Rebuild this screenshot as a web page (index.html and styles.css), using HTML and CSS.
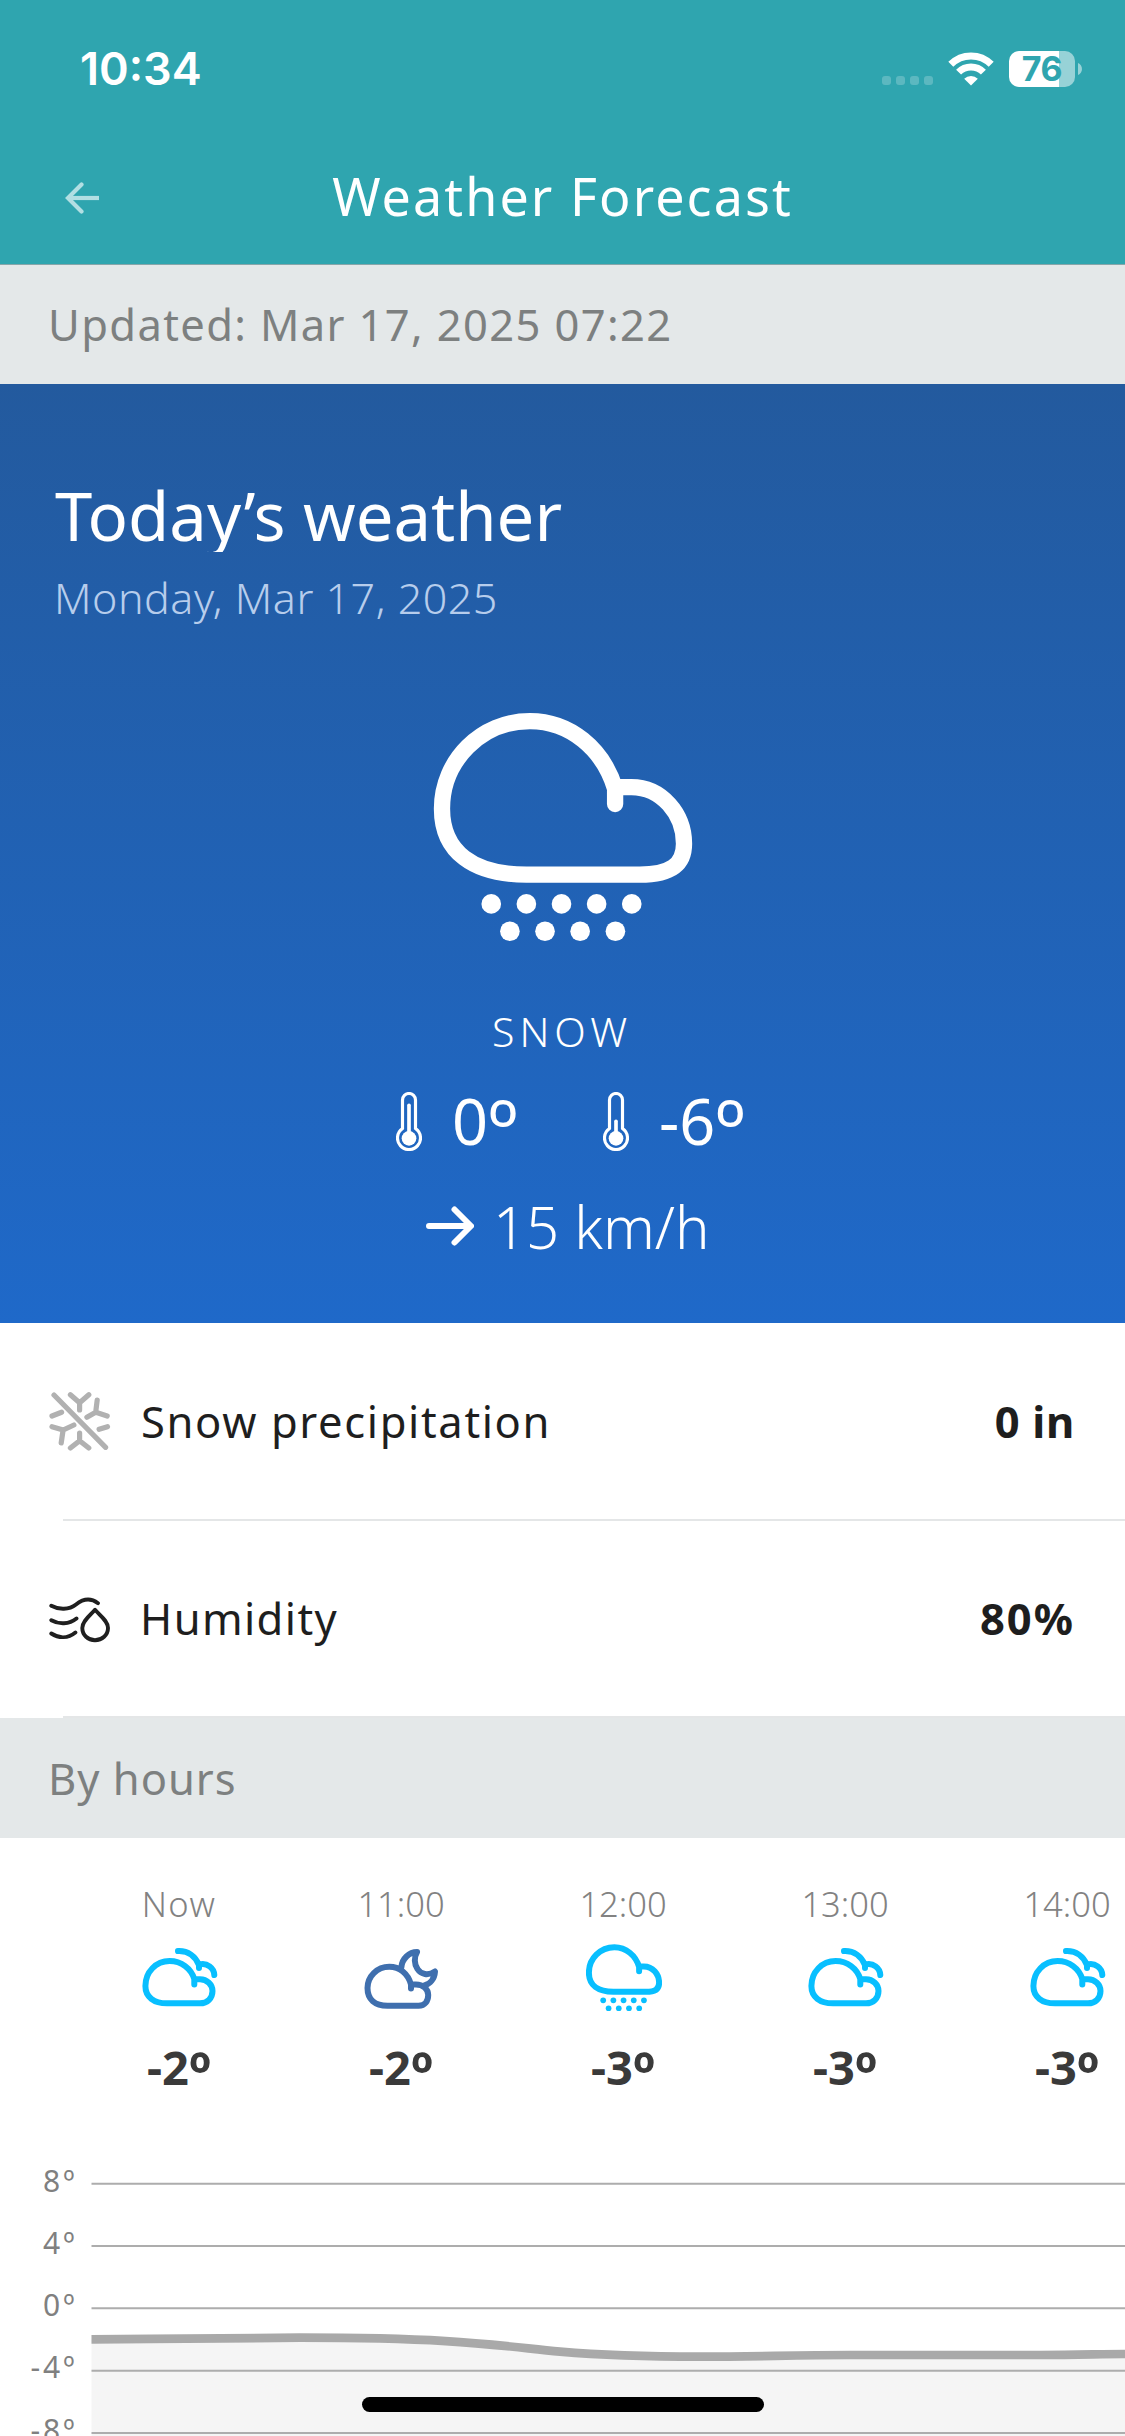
FILE: index.html
```html
<!DOCTYPE html>
<html lang="en">
<head>
<meta charset="utf-8">
<title>Weather Forecast</title>
<link rel="stylesheet" href="styles.css">
</head>
<body>
<svg class="defs" aria-hidden="true">
  <symbol id="snow-cloud" viewBox="96 92 787 696">
    <path d="M646 371V325C610 205 510 122 390 122C244 122 126 240 126 385C126 515 220 583 380 583H720C810 583 853 555 853 490C853 400 785 320 695 320H650" fill="none" stroke="currentColor" stroke-linecap="round" stroke-linejoin="round"/>
    <g fill="currentColor" stroke="none">
      <circle cx="274" cy="671" r="29.5"/><circle cx="379.5" cy="671" r="29.5"/><circle cx="485" cy="671" r="29.5"/><circle cx="590.5" cy="671" r="29.5"/><circle cx="696" cy="671" r="29.5"/>
      <circle cx="330" cy="753" r="29.5"/><circle cx="435.5" cy="753" r="29.5"/><circle cx="541" cy="753" r="29.5"/><circle cx="647" cy="753" r="29.5"/>
    </g>
  </symbol>
  <symbol id="cloudy" viewBox="0 0 90 70">
    <path d="M60.3 41.5V36C57 25.5 47.5 18 35.6 18C22 18 11.4 29 11.4 43C11.4 54 20 60.3 33 60.3H66C73.5 60.3 78.5 55 78.5 48C78.5 41.5 73 36.3 66 36.3H61M44 8C54 7.5 61.5 13.5 65 22V25M65.500 21.500C73 19.500 80 25 80.300 32"/>
  </symbol>
  <symbol id="night-cloud" viewBox="0 0 90 70">
    <path d="M55 45.500V41.500C52 30.500 43.500 23.700 33.300 23.700C21 23.700 11.500 33.500 11.500 45C11.500 56.500 19 62.700 31.500 62.700H62.600C69 62.700 72.200 58 72.200 52C72.200 46 67 41.400 60 41.400H56M45.400 24C46 16 53 9 61.100 9C58 14 58 21 61.500 26C65 31.500 72 33 79 28.500C78.500 36 74 41 68.500 42.500"/>
  </symbol>
</svg>

<main class="screen">
  <header class="header">
    <div class="status">
      <span class="clock">10:34</span>
      <div class="status-icons">
        <svg width="52" height="36" viewBox="0 0 52 36" fill="#fff" fill-opacity=".22"><rect x="0" y="25" width="9" height="9" rx="3"/><rect x="14" y="25" width="9" height="9" rx="3"/><rect x="28" y="25" width="9" height="9" rx="3"/><rect x="42" y="25" width="9" height="9" rx="3"/></svg>
        <svg class="wifi" width="46" height="36" viewBox="0 0 46 36" fill="none" stroke="#fff" stroke-width="7">
          <path d="M2.800 13.300A28.500 28.500 0 0 1 43.200 13.300"/>
          <path d="M10.600 21.100A17.500 17.500 0 0 1 35.400 21.100"/>
          <path d="M16.200 27.700L23 34.500L29.800 27.700A9.800 9.800 0 0 0 16.200 27.700Z" fill="#fff" stroke="none"/>
        </svg>
        <div class="battery"><span class="battery-level">76</span><svg class="battery-tip" width="4" height="12" viewBox="0 0 4 12"><path d="M0 0C5.300 2 5.300 10 0 12Z" fill="#fff" fill-opacity=".5"/></svg></div>
      </div>
    </div>
    <nav class="nav">
      <svg class="back" width="36" height="32" viewBox="0 0 36 32" fill="none" stroke="#b2dfe3" stroke-width="4.200" stroke-linecap="round"><path d="M16.500 2.500L3 16L16.500 29.500"/><path d="M4 16H34" stroke-linecap="butt"/></svg>
      <h1 class="title">Weather Forecast</h1>
    </nav>
  </header>

  <div class="bar updated">Updated: Mar 17, 2025 07:22</div>

  <section class="hero">
    <h2 class="hero-title">Today’s weather</h2>
    <p class="hero-date">Monday, Mar 17, 2025</p>
    <svg class="hero-icon"><use href="#snow-cloud"/></svg>
    <p class="condition">SNOW</p>
    <div class="temps">
      <svg class="thermo" viewBox="108 303 78 177"><path d="M127.500 412.500V327A19.500 19.500 0 0 1 166.500 327V412.500A34.500 34.500 0 1 1 127.500 412.500Z" fill="none" stroke="#fff" stroke-width="9.500"/><circle cx="147" cy="442" r="22" fill="#fff"/><path d="M147 343V430" stroke="#fff" stroke-width="11" stroke-linecap="round"/></svg>
      <span class="temp high">0<span class="deg">º</span></span>
      <svg class="thermo" viewBox="108 303 78 177"><path d="M127.500 412.500V327A19.500 19.500 0 0 1 166.500 327V412.500A34.500 34.500 0 1 1 127.500 412.500Z" fill="none" stroke="#fff" stroke-width="9.500"/><circle cx="147" cy="442" r="22" fill="#fff"/><path d="M147 391V430" stroke="#fff" stroke-width="11" stroke-linecap="round"/></svg>
      <span class="temp low">-6<span class="deg">º</span></span>
    </div>
    <div class="wind">
      <svg width="48" height="40" viewBox="0 0 48 40" fill="none" stroke="#fff" stroke-width="6" stroke-linecap="round" stroke-linejoin="round"><path d="M3 20H44M28.500 3.500L45 20L28.500 36.500"/></svg>
      <span>15 km/h</span>
    </div>
  </section>

  <ul class="details">
    <li class="detail">
      <svg width="62" height="60" viewBox="0 0 62 60" fill="none" stroke="#b1b1b1" stroke-width="5.200" stroke-linecap="round"><path d="M5 4L56.600 56.300M21.400 3.700L30.600 11.700L39.800 3.700M30.600 11.700V19M21.400 57L30.600 49.700L39.800 57M30.600 49.700V42M48.200 9L46.700 21.300L58.200 25M46.700 21.300L37.900 26.300M3 25L12.600 21.300M3 35.700L14.100 39L24.900 34M14.100 39L12.200 52M50.100 38.300L58.500 35.700"/></svg>
      <span class="detail-name">Snow precipitation</span>
      <strong class="detail-value">0 in</strong>
    </li>
    <li class="detail">
      <svg width="62" height="60" viewBox="0 0 62 60" fill="none" stroke="#1f1f1f" stroke-width="3.900" stroke-linecap="round" stroke-linejoin="round"><path d="M2.300 17.800C10 22 20 22 27 16.500C34 11 42 10 49 15.200M2.300 32.200C10 36.500 20 36.500 27.500 30.500M2.300 45.500C10 50.500 19 50.500 26.400 44.500M46 21.800C41 27.500 33.300 33 33.300 40C33.300 47 39 52.200 46 52.200S59 47 59 40C59 33 51 27.500 46 21.800Z"/></svg>
      <span class="detail-name humidity">Humidity</span>
      <strong class="detail-value percent">80%</strong>
    </li>
  </ul>

  <div class="bar by-hours">By hours</div>

  <section class="hours">
    <div class="hour"><span class="hour-time now">Now</span><svg class="hour-icon"><use href="#cloudy"/></svg><b class="hour-temp">-2<span class="deg">º</span></b></div>
    <div class="hour"><span class="hour-time">11:00</span><svg class="hour-icon night"><use href="#night-cloud"/></svg><b class="hour-temp">-2<span class="deg">º</span></b></div>
    <div class="hour"><span class="hour-time">12:00</span><svg class="hour-icon snow"><use href="#snow-cloud"/></svg><b class="hour-temp">-3<span class="deg">º</span></b></div>
    <div class="hour"><span class="hour-time">13:00</span><svg class="hour-icon"><use href="#cloudy"/></svg><b class="hour-temp">-3<span class="deg">º</span></b></div>
    <div class="hour"><span class="hour-time">14:00</span><svg class="hour-icon"><use href="#cloudy"/></svg><b class="hour-temp">-3<span class="deg">º</span></b></div>
  </section>

  <svg class="chart" width="1125" height="344" viewBox="0 0 1125 344">
    <path d="M91.500 247.300C160 247.300 220 245.700 300 245.700C460 245.700 500 254 560 259.700C610 264 650 264.700 700 264.700C760 264.700 790 263 850 263H1040C1080 263 1100 262 1125 262V344H91.500Z" fill="#f5f5f5"/>
    <path d="M91.500 91.700H1125M91.500 154H1125M91.500 216.300H1125M91.500 278.700H1125M91.500 341H1125" stroke="#adadad" stroke-width="2"/>
    <path d="M91.500 247.300C160 247.300 220 245.700 300 245.700C460 245.700 500 254 560 259.700C610 264 650 264.700 700 264.700C760 264.700 790 263 850 263H1040C1080 263 1100 262 1125 262" fill="none" stroke="#a9a9a9" stroke-width="8.700"/>
    <g class="axis" text-anchor="end"><text x="77.500" y="99.700">8º</text><text x="77.500" y="161.700">4º</text><text x="77.500" y="223.800">0º</text><text x="77.500" y="286.300">-4º</text><text x="77.500" y="348.600">-8º</text></g>
  </svg>

  <div class="home-indicator"></div>
</main>
</body>
</html>
```
FILE: styles.css
```css
* { box-sizing: border-box; }
body, h1, h2, p, ul { margin: 0; padding: 0; }
body {
  background: #fff;
  font-family: "Noto Sans", "Open Sans", sans-serif;
}
svg { display: block; flex: none; }
.defs { position: absolute; width: 0; height: 0; }

.screen {
  position: relative;
  width: 1125px;
  height: 2436px;
  overflow: hidden;
}

/* Header */
.header {
  height: 265px;
  background: #2fa5af;
  border-bottom: 1px solid #87a6aa;
  color: #fff;
}
.status {
  display: flex;
  align-items: center;
  justify-content: space-between;
  height: 138px;
  padding: 0 43px 0 80px;
}
.clock { font: 600 45px/60px Inter, sans-serif; }
.status-icons { display: flex; align-items: center; }
.wifi { margin: 0 15px 0 14px; }
.battery { display: flex; align-items: center; gap: 3px; }
.battery-level {
  width: 66px;
  height: 36px;
  border-radius: 10px;
  background: linear-gradient(90deg, #fff 50px, rgba(255, 255, 255, .5) 50px);
  color: #2fa5af;
  font: 700 34px/36px Inter, sans-serif;
  letter-spacing: -0.5px;
  text-align: center;
}
.nav {
  display: grid;
  grid-template-columns: 1fr auto 1fr;
  align-items: center;
  height: 116px;
}
.back { margin: 4px 0 0 65px; }
.title {
  font-size: 52px;
  font-weight: 400;
  line-height: 70px;
  letter-spacing: 2.1px;
}

/* Grey bars */
.bar {
  padding-left: 48px;
  background: #e4e8e9;
  color: #7d8080;
  font-size: 43.5px;
}
.updated { height: 119px; line-height: 118px; letter-spacing: 1.37px; }
.by-hours { height: 120px; line-height: 120px; letter-spacing: 1px; }

/* Today */
.hero {
  height: 939px;
  padding: 94px 0 0 55px;
  background: linear-gradient(#235a9e, #1f69c9);
  color: #fff;
}
.hero-title {
  height: 74px;
  overflow: hidden;
  font-size: 67px;
  font-weight: 400;
  line-height: 74px;
}
.hero-date {
  margin: 21px 0 0 -1px;
  color: #b7cdec;
  font-size: 43px;
  font-weight: 300;
  line-height: 50px;
  letter-spacing: .52px;
}
.hero-icon {
  width: 262px;
  height: 232px;
  margin: 88px 0 0 377px;
  stroke-width: 49;
}
.condition {
  margin: 63px 0 0 437px;
  font-size: 41px;
  font-weight: 300;
  line-height: 50px;
  letter-spacing: 5px;
}
.deg { line-height: 0; letter-spacing: 0; }
.temps {
  display: flex;
  align-items: center;
  height: 72px;
  margin: 29px 0 0 341px;
}
.thermo { width: 26px; height: 59px; }
.temp { font-size: 63px; line-height: 72px; }
.temp .deg { font-size: 1.27em; vertical-align: -.16em; }
.high { width: 151px; margin-left: 30px; }
.low { margin-left: 30px; }
.wind {
  display: flex;
  align-items: center;
  gap: 19px;
  height: 70px;
  margin: 34px 0 0 371px;
  font-size: 58px;
  font-weight: 300;
}

/* Details */
.details { list-style: none; }
.detail {
  display: flex;
  align-items: center;
  height: 197.5px;
  margin-left: 63px;
  padding-right: 52px;
  border-bottom: 2px solid #e4e6e7;
  color: #1e1e1e;
  font-size: 43.5px;
}
.detail svg { margin-left: -14px; }
.detail-name { flex: 1; margin-left: 30px; letter-spacing: 1.65px; }
.humidity { margin-left: 29px; letter-spacing: 1.4px; }
.detail-value { letter-spacing: .7px; margin-right: -2px; }
.percent { letter-spacing: 2px; }

/* Hours */
.hours {
  display: grid;
  grid-template-columns: repeat(5, 222px);
  height: 254px;
  padding: 46px 0 0 68px;
}
.hour { display: flex; flex-direction: column; align-items: center; }
.hour-time {
  color: #828282;
  font-size: 34.5px;
  font-weight: 300;
  line-height: 40px;
}
.now { letter-spacing: 1.5px; }
.hour-icon {
  width: 90px;
  height: 70px;
  margin: 19px 0 29px;
  fill: none;
  stroke: #08bfff;
  stroke-width: 6;
  stroke-linecap: round;
  stroke-linejoin: round;
}
.night { stroke: #3f6fae; }
.snow {
  width: 76px;
  height: 68px;
  margin: 20px 0 30px 1px;
  color: #08bfff;
  stroke-width: 62;
}
.hour-temp {
  color: #3a3a3a;
  font-size: 47px;
  line-height: 50px;
}
.hour-temp .deg { font-size: 1.22em; vertical-align: -.15em; }

/* Chart */
.axis { fill: #808080; font-size: 30px; letter-spacing: 3px; }

.home-indicator {
  position: absolute;
  left: 362px;
  bottom: 24px;
  width: 402px;
  height: 15px;
  border-radius: 8px;
  background: #000;
}
```
